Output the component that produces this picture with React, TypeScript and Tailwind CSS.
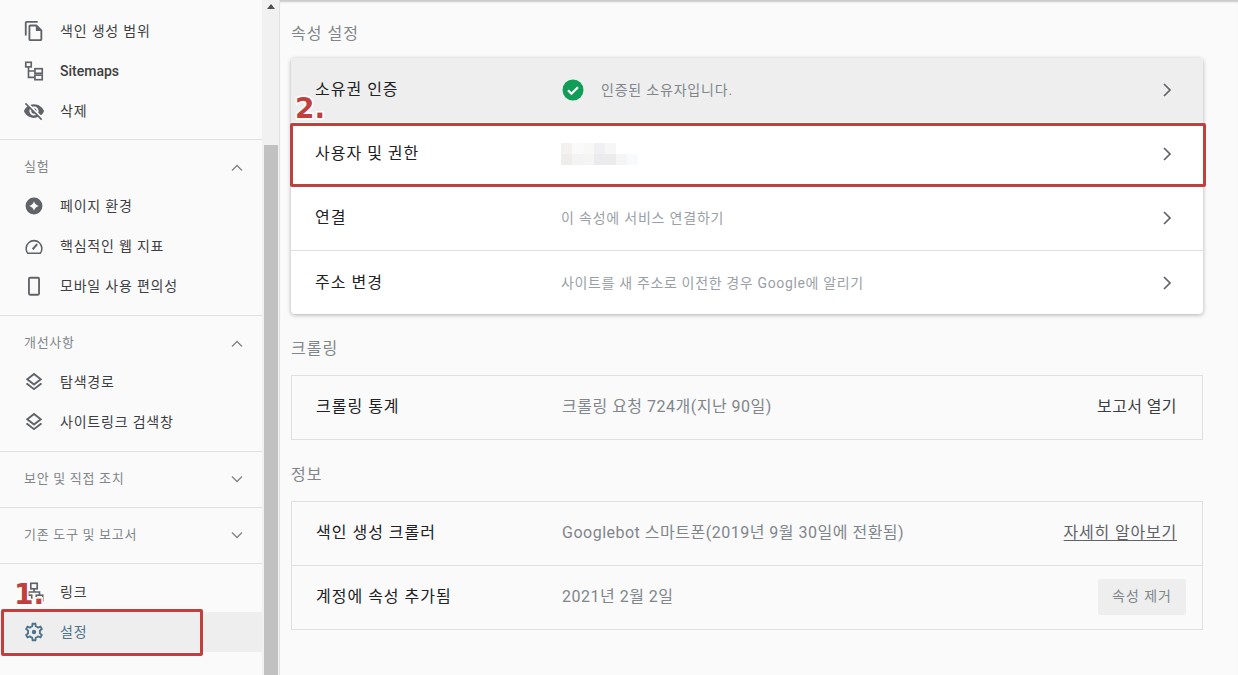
import React from 'react';

const FONT = "font-['Roboto','Noto_Sans_CJK_KR',sans-serif]";

const Icon = ({ children, className = 'text-[#5f6368]' }: { children: React.ReactNode; className?: string }) => (
  <svg viewBox="0 0 24 24" width="22" height="22" fill="currentColor" className={className}>
    {children}
  </svg>
);

const icons: Record<string, React.ReactNode> = {
  copy: <path d="M16 1H4c-1.1 0-2 .9-2 2v14h2V3h12V1zm-1 4H8c-1.1 0-1.99.9-1.99 2L6 21c0 1.1.89 2 1.99 2H19c1.1 0 2-.9 2-2V11l-6-6zM8 21V7h6v5h5v9H8z" />,
  sitemap: (
    <g fill="none" stroke="currentColor" strokeWidth="1.8">
      <rect x="3" y="2.5" width="6" height="5" />
      <rect x="13" y="9.5" width="8" height="5" />
      <rect x="13" y="16.5" width="8" height="5" />
      <path d="M6 7.5V19h7M6 12h7" />
    </g>
  ),
  eyeOff: <path d="M12 7c2.76 0 5 2.24 5 5 0 .65-.13 1.26-.36 1.83l2.92 2.92c1.51-1.26 2.7-2.89 3.43-4.75-1.73-4.39-6-7.5-11-7.5-1.4 0-2.74.25-3.98.7l2.16 2.16C10.74 7.13 11.35 7 12 7zM2 4.27l2.28 2.28.46.46C3.08 8.3 1.78 10.02 1 12c1.73 4.39 6 7.5 11 7.5 1.55 0 3.03-.3 4.38-.84l.42.42L19.73 22 21 20.73 3.27 3 2 4.27zM7.53 9.8l1.55 1.55c-.05.21-.08.43-.08.65 0 1.66 1.34 3 3 3 .22 0 .44-.03.65-.08l1.55 1.55c-.67.33-1.41.53-2.2.53-2.76 0-5-2.24-5-5 0-.79.2-1.53.53-2.2zm4.31-.78l3.15 3.15.02-.16c0-1.66-1.34-3-3-3l-.17.01z" />,
  experience: <path fillRule="evenodd" d="M12 2.8a9.2 9.2 0 1 0 0 18.4 9.2 9.2 0 0 0 0-18.4zM12 6.8c.8 2.8 2.4 4.4 5.2 5.2-2.8.8-4.4 2.4-5.2 5.2-.8-2.8-2.4-4.4-5.2-5.2 2.8-.8 4.4-2.4 5.2-5.2z" />,
  speed: (
    <g fill="none" stroke="currentColor" strokeWidth="1.7">
      <path d="M5.2 20a8.6 8.6 0 1 1 13.6 0z" />
      <path d="M10.5 15.5L15.5 10" strokeWidth="2.2" />
    </g>
  ),
  phone: <rect x="6.5" y="3" width="11" height="18.5" rx="1.2" fill="none" stroke="currentColor" strokeWidth="2" />,
  layers: <path d="M11.99 18.54l-7.37-5.73L3 14.07l9 7 9-7-1.63-1.27-7.38 5.74zM12 16l7.36-5.73L21 9l-9-7-9 7 1.63 1.27L12 16zm0-11.47L17.74 9 12 13.47 6.26 9 12 4.53z" />,
  links: (
    <g fill="none" stroke="currentColor" strokeWidth="1.8">
      <rect x="8.5" y="2.5" width="7" height="6" />
      <rect x="2.5" y="15.5" width="7" height="6" />
      <rect x="14.5" y="15.5" width="7" height="6" />
      <path d="M12 8.5V12M6 15.5V12h12v3.5" />
    </g>
  ),
  settings: (
    <>
      <path d="M19.43 12.98c.04-.32.07-.64.07-.98 0-.34-.03-.66-.07-.98l2.11-1.65c.19-.15.24-.42.12-.64l-2-3.46c-.09-.16-.26-.25-.44-.25-.06 0-.12.01-.17.03l-2.49 1c-.52-.4-1.08-.73-1.69-.98l-.38-2.65C14.46 2.18 14.25 2 14 2h-4c-.25 0-.46.18-.49.42l-.38 2.65c-.61.25-1.17.59-1.69.98l-2.49-1c-.06-.02-.12-.03-.18-.03-.17 0-.34.09-.43.25l-2 3.46c-.13.22-.07.49.12.64l2.11 1.65c-.04.32-.07.65-.07.98 0 .33.03.66.07.98l-2.11 1.65c-.19.15-.24.42-.12.64l2 3.46c.09.16.26.25.44.25.06 0 .12-.01.17-.03l2.49-1c.52.4 1.08.73 1.69.98l.38 2.65c.03.24.24.42.49.42h4c.25 0 .46-.18.49-.42l.38-2.65c.61-.25 1.17-.59 1.69-.98l2.49 1c.06.02.12.03.18.03.17 0 .34-.09.43-.25l2-3.46c.12-.22.07-.49-.12-.64l-2.11-1.65zm-1.98-1.71c.04.31.05.52.05.73 0 .21-.02.43-.05.73l-.14 1.13.89.7 1.08.84-.7 1.21-1.27-.51-1.04-.42-.9.68c-.43.32-.84.56-1.25.73l-1.06.43-.16 1.13-.2 1.35h-1.4l-.19-1.35-.16-1.13-1.06-.43c-.43-.18-.83-.41-1.23-.71l-.91-.7-1.06.43-1.27.51-.7-1.21 1.08-.84.89-.7-.14-1.13c-.03-.31-.05-.54-.05-.74s.02-.43.05-.73l.14-1.13-.89-.7-1.08-.84.7-1.21 1.27.51 1.04.42.9-.68c.43-.32.84-.56 1.25-.73l1.06-.43.16-1.13.2-1.35h1.39l.19 1.35.16 1.13 1.06.43c.43.18.83.41 1.23.71l.91.7 1.06-.43 1.27-.51.7 1.21-1.07.85-.89.7.14 1.13z" />
      <circle cx="12" cy="12" r="2.4" />
    </>
  ),
};

const NavItem = ({ icon, label, active }: { icon: string; label: string; active?: boolean }) => (
  <div className={`flex h-10 items-center pl-[23px] ${active ? 'bg-[#eeeeee]' : ''}`}>
    <Icon className={active ? 'text-[#4d7189]' : 'text-[#5f6368]'}>{icons[icon]}</Icon>
    <span
      className={`ml-[15px] text-[14px] ${active ? 'text-[#4d7189]' : 'text-[#3c4043]'} ${
        icon === 'sitemap' ? 'font-medium' : 'tracking-[0.8px]'
      }`}
    >
      {label}
    </span>
  </div>
);

const Chevron = ({ up }: { up?: boolean }) => (
  <svg width="14" height="14" viewBox="0 0 14 14" fill="none" stroke="#80868b" strokeWidth="1.4">
    <path d={up ? 'M2 9.5l5-5 5 5' : 'M2 4.5l5 5 5-5'} />
  </svg>
);

const GroupHeader = ({ label, open }: { label: string; open?: boolean }) => (
  <div className={`flex justify-between pl-6 pr-[18px] ${open ? 'h-[46px] items-start pt-[17px]' : 'h-[55px] items-center pb-[2px]'}`}>
    <span className="text-[13px] leading-5 tracking-[0.7px] text-[#80868b]">{label}</span>
    <span className={open ? 'mt-[4px]' : ''}>
      <Chevron up={open} />
    </span>
  </div>
);

const Sidebar = () => (
  <div className="w-[262px] shrink-0 pt-[11px]">
    <div className="pb-2">
      <NavItem icon="copy" label="색인 생성 범위" />
      <NavItem icon="sitemap" label="Sitemaps" />
      <NavItem icon="eyeOff" label="삭제" />
    </div>
    <div className="border-t border-[#e0e0e0] pb-[9px]">
      <GroupHeader label="실험" open />
      <NavItem icon="experience" label="페이지 환경" />
      <NavItem icon="speed" label="핵심적인 웹 지표" />
      <NavItem icon="phone" label="모바일 사용 편의성" />
    </div>
    <div className="border-t border-[#e0e0e0] pb-[9px]">
      <GroupHeader label="개선사항" open />
      <NavItem icon="layers" label="탐색경로" />
      <NavItem icon="layers" label="사이트링크 검색창" />
    </div>
    <div className="border-t border-[#e0e0e0]">
      <GroupHeader label="보안 및 직접 조치" />
    </div>
    <div className="border-t border-[#e0e0e0]">
      <GroupHeader label="기존 도구 및 보고서" />
    </div>
    <div className="border-t border-[#e0e0e0] pt-2">
      <NavItem icon="links" label="링크" />
      <NavItem icon="settings" label="설정" active />
    </div>
  </div>
);

const Scrollbar = () => (
  <div className="flex w-[17px] shrink-0 flex-col items-center bg-[#f1f1f1] pt-1">
    <div className="h-0 w-0 border-x-[4px] border-b-[5px] border-x-transparent border-b-[#505050]" />
    <div className="mt-[136px] w-[14px] flex-1 bg-[#c1c1c1]" />
  </div>
);

const Row = ({
  label,
  children,
  right,
  className = 'h-[63px] pb-[2px]',
}: {
  label: string;
  children: React.ReactNode;
  right?: React.ReactNode;
  className?: string;
}) => (
  <div className={`flex items-center pr-4 pl-[24px] ${className}`}>
    <span className="w-[246px] shrink-0 text-[16px] tracking-[1px] text-[#202124]">{label}</span>
    <div className="min-w-0 flex-1 text-[16px] tracking-[0.5px] text-[#80868b]">{children}</div>
    {right}
  </div>
);

const Arrow = () => (
  <svg width="24" height="24" viewBox="0 0 24 24" fill="none" stroke="#5f6368" strokeWidth="1.7" className="mr-[8px]">
    <path d="M9 6l6 6-6 6" />
  </svg>
);

const blur = ['#f4f2ef', '#fafafa', '#f8f8f6', '#f0f0f2', '#f6f6f6', '#ffffff', '#ffffff', '#efedea', '#f3f3f3', '#f5f5f3', '#ebebee', '#ebebee', '#f5f5f5', '#f8fbfc'];

const Blurred = () => (
  <div className="grid w-[77px] grid-cols-7 grid-rows-2">
    {blur.map((c, i) => (
      <div key={i} className="h-[11px]" style={{ backgroundColor: c }} />
    ))}
  </div>
);

const Mark = ({ children, className }: { children: string; className: string }) => (
  <span
    className={`absolute font-['DejaVu_Sans'] text-[28px] leading-none font-bold text-[#c04040] [-webkit-text-stroke:3px_white] [paint-order:stroke_fill] ${className}`}
  >
    {children}
  </span>
);

const SectionTitle = ({ children }: { children: string }) => (
  <h2 className="text-[16px] leading-5 tracking-[1px] text-[#80868b]">{children}</h2>
);

export default function App() {
  return (
    <div className={`relative flex h-[675px] w-[1238px] overflow-hidden bg-[#fafafa] ${FONT}`}>
      <Sidebar />
      <Scrollbar />

      <main className="flex-1 border-l border-[#e0e0e0] pt-[24px] pr-[35px] pl-[11px] shadow-[inset_0_3px_2px_-1px_rgba(0,0,0,0.2)]">
        <SectionTitle>속성 설정</SectionTitle>

        <div className="mt-[14px] rounded-sm bg-white shadow-[0_1px_4px_rgba(0,0,0,0.3)]">
          <Row label="소유권 인증" className="h-16 bg-[#eeeeee]" right={<Arrow />}>
            <div className="flex items-center">
              <svg width="24" height="24" viewBox="0 0 24 24">
                <circle cx="12" cy="12" r="10.5" fill="#0f9d58" />
                <path d="M7 12.3l3.4 3.4L17 9.2" fill="none" stroke="white" strokeWidth="2.2" />
              </svg>
              <span className="ml-[16px] text-[14px] tracking-[0.8px]">인증된 소유자입니다.</span>
            </div>
          </Row>
          <div className="relative">
            <Row label="사용자 및 권한" className="h-16" right={<Arrow />}>
              <Blurred />
            </Row>
            <div className="absolute top-[1px] -right-[3px] -bottom-[1px] -left-[1px] rounded-[2px] border-[3px] border-[#c04040]" />
          </div>
          <Row label="연결" className="h-[65px] border-b border-[#e0e0e0]" right={<Arrow />}>
            <span className="text-[14px] tracking-[0.8px] text-[#9aa0a6]">이 속성에 서비스 연결하기</span>
          </Row>
          <Row label="주소 변경" className="h-[63px]" right={<Arrow />}>
            <span className="text-[14px] tracking-[0.65px] text-[#9aa0a6]">사이트를 새 주소로 이전한 경우 Google에 알리기</span>
          </Row>
        </div>

        <div className="mt-[25px]">
          <SectionTitle>크롤링</SectionTitle>
        </div>
        <div className="mt-4 border border-[#e0e0e0]">
          <Row label="크롤링 통계" right={<span className="pr-[9px] text-[16px] tracking-[0.4px] text-[#3c4043]">보고서 열기</span>}>
            크롤링 요청 724개(지난 90일)
          </Row>
        </div>

        <div className="mt-[25px]">
          <SectionTitle>정보</SectionTitle>
        </div>
        <div className="mt-4 border border-[#e0e0e0]">
          <Row
            label="색인 생성 크롤러"
            className="h-16 border-b border-[#e0e0e0] pb-[2px]"
            right={<a className="pr-[9px] text-[16px] tracking-[0.8px] text-[#5f6368] underline underline-offset-2">자세히 알아보기</a>}
          >
            Googlebot 스마트폰(2019년 9월 30일에 전환됨)
          </Row>
          <Row
            label="계정에 속성 추가됨"
            right={
              <button className="h-9 w-[88px] rounded-[2px] bg-[#eeeeee] text-[14px] tracking-[1px] text-[#80868b]">속성 제거</button>
            }
          >
            2021년 2월 2일
          </Row>
        </div>
      </main>

      {/* annotations drawn over the capture */}
      <div className="absolute top-[609px] left-[1px] h-[47px] w-[202px] rounded-[2px] border-[3px] border-[#c04040]" />
      <Mark className="top-[581px] left-[14px]">1.</Mark>
      <Mark className="top-[95px] left-[295px]">2.</Mark>
    </div>
  );
}
